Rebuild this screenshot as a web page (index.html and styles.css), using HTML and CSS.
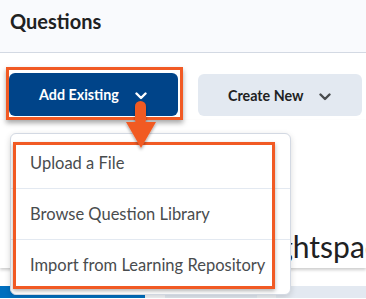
FILE: index.html
```html
<!DOCTYPE html>
<html>
  <head>
    <meta charset="utf-8">
    <meta name="viewport" content="width=device-width, initial-scale=1">
    <title>Questions</title>
    <link rel="stylesheet" href="styles.css">
  </head>
  <body>
    <div id="header">
      <h1 class="title">Questions</h1>
    </div>
    <div id="toolbar">
      <div class="highlight">
        <button class="btn btn_primary">Add Existing
          <svg class="chevron" viewBox="0 0 12 8" width="12" height="8"><path d="M1.5 1.5 6 6l4.5-4.5" fill="none" stroke="currentColor" stroke-width="2.4" stroke-linecap="round" stroke-linejoin="round"/></svg>
        </button>
      </div>
      <button class="btn btn_secondary">Create New
        <svg class="chevron" viewBox="0 0 12 8" width="12" height="8"><path d="M1.5 1.5 6 6l4.5-4.5" fill="none" stroke="currentColor" stroke-width="2.4" stroke-linecap="round" stroke-linejoin="round"/></svg>
      </button>
    </div>
    <div id="card">
      <h2 class="welcome">Brightspace</h2>
    </div>
    <div id="tabs">
      <span class="tab tab_active"></span>
      <span class="tab tab_gap"></span>
      <span class="tab tab_one"></span>
      <span class="tab tab_two"></span>
      <span class="tab tab_rest"></span>
    </div>

    <div id="menu">
      <div class="menu_item">Upload a File</div>
      <div class="menu_item">Browse Question Library</div>
      <div class="menu_item">Import from Learning Repository</div>
      <div class="menu_highlight"></div>
    </div>

    <svg id="pointer" viewBox="0 0 40 56" width="40" height="56">
      <defs>
        <filter id="drop" x="-30%" y="-20%" width="160%" height="150%">
          <feDropShadow dx="0" dy="2" stdDeviation="1.5" flood-color="#000" flood-opacity="0.35"/>
        </filter>
      </defs>
      <g filter="url(#drop)" fill="#f15a24">
        <rect x="12" y="3" width="11" height="24" rx="5.5"/>
        <polygon points="3,24 33,24 18,50"/>
      </g>
    </svg>
  </body>
</html>
```

FILE: styles.css
```css
body {
  margin: 0;
  font-family: 'Lato', 'Noto Sans', sans-serif;
  color: #202122;
  background: #ffffff;
  overflow: hidden;
  position: relative;
}

#header {
  height: 53px;
  box-sizing: border-box;
  padding: 9px 10px 0;
  background: #f9fafd;
  border-bottom: 1px solid #d3d9e3;
}

.title {
  margin: 0;
  font-size: 20px;
  line-height: 24px;
  font-weight: 700;
}

#toolbar {
  display: flex;
  align-items: flex-start;
  padding: 14px 0 0 6px;
}

.highlight {
  border: 3px solid #f15a24;
  padding: 3px 2px 1px 0;
  box-shadow: 0 3px 5px rgba(0, 0, 0, 0.35);
}

.btn {
  display: flex;
  align-items: center;
  justify-content: space-between;
  box-sizing: border-box;
  padding: 0 31px 0 30px;
  border: none;
  border-radius: 6px;
  font-family: inherit;
  font-size: 14.3px;
  font-weight: 700;
}

.btn_primary {
  width: 169px;
  height: 43px;
  background: #004489;
  color: #ffffff;
}

.btn_secondary {
  width: 164px;
  height: 42px;
  margin: 7px 0 0 15px;
  background: #e3e9f1;
  color: #202122;
}

.btn_secondary .chevron {
  color: #494c4e;
}

.chevron {
  margin-top: 3px;
}

#card {
  padding: 108px 0 4px 240px;
  box-shadow: 0 2px 3px rgba(0, 0, 0, 0.2);
  white-space: nowrap;
}

.welcome {
  margin: 0;
  font-size: 30px;
  line-height: 36px;
  font-weight: 400;
}

#tabs {
  display: flex;
  margin-top: 18px;
  height: 12px;
  background: #e3e9f1;
}

.tab {
  height: 100%;
}

.tab_active {
  width: 145px;
  background: #006fbf;
}

.tab_gap {
  width: 20px;
  background: #f5f7fa;
}

.tab_one {
  width: 92px;
}

.tab_two {
  width: 19px;
  background: #eef2f6;
}

#menu {
  position: absolute;
  left: 10px;
  top: 133px;
  width: 281px;
  box-sizing: border-box;
  padding: 4px 0;
  background: #ffffff;
  border: 1px solid #d3d9e3;
  border-radius: 6px;
  box-shadow: 0 2px 6px rgba(0, 0, 0, 0.15);
}

.menu_item {
  height: 50px;
  display: flex;
  align-items: center;
  padding-left: 19px;
  font-size: 16.5px;
  color: #494c4e;
}

.menu_item + .menu_item {
  border-top: 1px solid #e3e9f1;
}

.menu_highlight {
  position: absolute;
  left: 2px;
  top: 8px;
  width: 262px;
  height: 147px;
  box-sizing: border-box;
  border: 3px solid #f15a24;
  box-shadow: 0 2px 4px rgba(0, 0, 0, 0.3);
}

#pointer {
  position: absolute;
  left: 123px;
  top: 98px;
}
```
